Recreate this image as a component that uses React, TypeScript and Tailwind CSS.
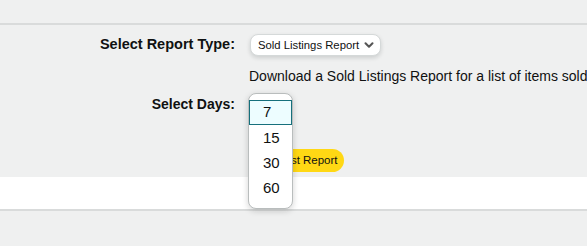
import { ChevronDown } from 'lucide-react';

const days = ['7', '15', '30', '60'];

function DaysList() {
  return (
    <div className="absolute left-[248px] top-[-1px] z-10 w-[45px] h-[116px] rounded-lg border border-[#b9bdbd] bg-white pt-[6px] shadow-[0_2px_6px_rgba(15,17,17,0.18)]">
      {days.map((d, i) => (
        <div
          key={d}
          className={
            i === 0
              ? 'flex h-[25px] items-center border border-[#16707c] bg-[#edfdff] pl-[13px] text-[15px] text-[#0f1111]'
              : 'flex h-[25px] items-center pl-[14px] pt-[1px] text-[15px] text-[#0f1111]'
          }
        >
          {d}
        </div>
      ))}
    </div>
  );
}

export default function App() {
  return (
    <div className="min-h-[246px] overflow-hidden bg-[#eff0f0] font-['Liberation_Sans',Arial,sans-serif] text-[#0f1111]">
      <div className="h-[25px] border-b-2 border-[#d9dbdb]" />

      <div className="pt-[9px]">
        <div className="flex h-[22px] items-center">
          <div className="w-[235px] text-right text-[14.5px] font-bold">Select Report Type:</div>
          <button className="ml-[15px] flex h-[22px] items-center gap-[3px] rounded-lg border border-[#d5d9d9] bg-white pl-[7px] pr-[4px] text-[11.3px] text-[#0f1111] shadow-[0_2px_4px_rgba(15,17,17,0.15)]">
            Sold Listings Report
            <ChevronDown size={14} strokeWidth={3.5} className="text-[#555]" />
          </button>
        </div>

        <div className="mt-[10px] whitespace-nowrap pl-[249px] text-[14px] leading-[20px]">
          Download a Sold Listings Report for a list of items sold in the last period.
        </div>

        <div className="relative mt-[8px] flex h-[20px] items-center">
          <div className="w-[235px] text-right text-[14px] font-bold">Select Days:</div>
          <DaysList />
        </div>

        <div className="mt-[33px] pl-[251px]">
          <button className="h-[23px] rounded-full bg-[#ffd814] px-[6px] text-[11.5px] text-[#0f1111]">
            Request Report
          </button>
        </div>
      </div>

      <div className="mt-[5px] h-[34px] border-b-2 border-[#d9dbdb] bg-white" />
    </div>
  );
}
